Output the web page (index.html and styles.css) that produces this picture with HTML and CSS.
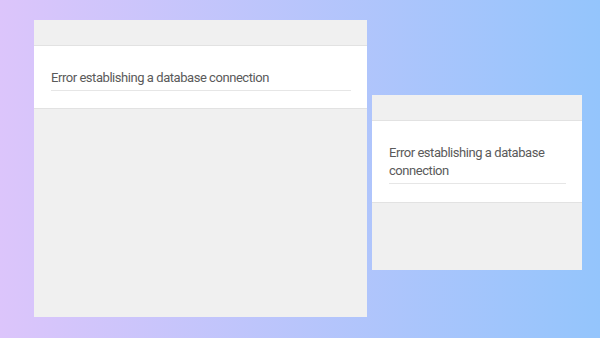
FILE: index.html
```html
<!DOCTYPE html>
<html lang="en">
<head>
    <meta charset="UTF-8">
    <meta name="viewport" content="width=device-width, initial-scale=1.0">
    <title>Database error preview</title>
    <link rel="stylesheet" href="styles.css">
</head>
<body>
    <div class="stage">
        <div class="window window-large">
            <div class="window-bar"></div>
            <div class="notice">
                <p class="notice-text">Error establishing a database connection</p>
            </div>
        </div>

        <div class="window window-small">
            <div class="window-bar"></div>
            <div class="notice">
                <p class="notice-text">Error establishing a database connection</p>
            </div>
        </div>
    </div>
</body>
</html>
```

FILE: styles.css
```css
html, body {
    margin: 0;
    height: 100%;
}
body {
    font-family: Roboto, "Liberation Sans", Arial, sans-serif;
    background: linear-gradient(90deg, #dcc5fb 0%, #94c5fc 100%);
    overflow: hidden;
}
.stage {
    display: flex;
    align-items: flex-start;
    gap: 5px;
    padding: 20px 0 0 34px;
}
.window {
    background-color: #f0f0f0;
    box-sizing: border-box;
}
.window-large {
    width: 333px;
    height: 297px;
}
.window-small {
    width: 210px;
    height: 175px;
    margin-top: 75px;
}
.window-bar {
    height: 25px;
    border-bottom: 1px solid #e2e2e2;
}
.notice {
    background: white;
    padding: 23px 16px 17px 17px;
    border-bottom: 1px solid #e2e2e2;
}
.window-small .notice {
    padding-bottom: 18px;
}
.notice-text {
    margin: 0;
    padding-bottom: 3px;
    font-size: 13px;
    line-height: 18px;
    letter-spacing: -0.45px;
    color: #5a5a5a;
    border-bottom: 1px solid #e6e6e6;
}
```
